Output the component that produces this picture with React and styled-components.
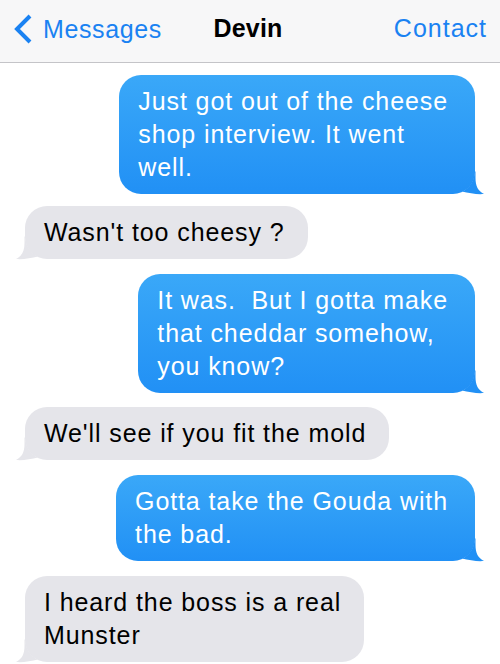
import React from "react";
import styled, { createGlobalStyle } from "styled-components";

const GlobalStyle = createGlobalStyle`
  html, body {
    margin: 0;
    padding: 0;
    background: #ffffff;
  }
  body {
    font-family: "Liberation Sans", Arial, Helvetica, sans-serif;
    -webkit-font-smoothing: antialiased;
  }
`;

const Screen = styled.div`
  width: 500px;
  height: 664px;
  overflow: hidden;
  background: #ffffff;
  display: flex;
  flex-direction: column;
`;

const NavBar = styled.header`
  box-sizing: border-box;
  height: 63px;
  flex: none;
  padding: 14px 13px 0 13px;
  background: #f7f7f8;
  border-bottom: 1px solid #c4c4c8;
  display: grid;
  grid-template-columns: 1fr auto 1fr;
  align-items: start;
`;

const BackButton = styled.div`
  display: flex;
  align-items: center;
  gap: 10px;
  color: #1a82f2;
  font-size: 25px;
  letter-spacing: 0.6px;
  line-height: 29px;
  justify-self: start;
`;

const Title = styled.div`
  font-size: 25px;
  font-weight: 700;
  line-height: 29px;
  color: #000;
  letter-spacing: 0.2px;
  transform: translateX(-2px);
`;

const NavAction = styled.div`
  justify-self: end;
  color: #1a82f2;
  font-size: 25px;
  line-height: 29px;
  letter-spacing: 1px;
`;

const Thread = styled.main`
  display: flex;
  flex-direction: column;
  padding: 12px 25px 0 25px;
`;

const Bubble = styled.div`
  position: relative;
  align-self: ${(p) => (p.$mine ? "flex-end" : "flex-start")};
  margin-top: ${(p) => p.$gap}px;
  padding: ${(p) => (p.$mine ? "10px 27px 10px 19px" : "10px 23px 10px 19px")};
  border-radius: 22px;
  background: ${(p) =>
    p.$mine ? "linear-gradient(180deg, #3aa8f8 0%, #2190f5 100%)" : "#e5e5ea"};
  color: ${(p) => (p.$mine ? "#ffffff" : "#000000")};
  font-size: 25px;
  line-height: 33px;
  letter-spacing: 0.9px;
`;

const Line = styled.span`
  display: block;
  white-space: pre;
`;

const TailSvg = styled.svg`
  position: absolute;
  bottom: 0;
  width: 34px;
  height: 22px;
  overflow: visible;
  ${(p) =>
    p.$mine
      ? "right: -10px;"
      : "left: -10px; transform: scaleX(-1);"}
`;

function Tail({ mine }) {
  return (
    <TailSvg $mine={mine} viewBox="0 0 34 22" aria-hidden="true">
      <path
        d="M24.5 -0.5 L24.5 6 C24.5 14 27 19 33 22 C27 22.6 18 21.5 11 19.6 A22 22 0 0 0 23.6 -0.5 Z"
        fill={mine ? "#2190f5" : "#e5e5ea"}
      />
    </TailSvg>
  );
}

const Chevron = () => (
  <svg width="20" height="30" viewBox="0 0 20 30" aria-hidden="true">
    <path
      d="M17 2 L4 15 L17 28"
      fill="none"
      stroke="#1a82f2"
      strokeWidth="4"
      strokeLinecap="butt"
      strokeLinejoin="miter"
    />
  </svg>
);

const messages = [
  { mine: true, gap: 0, lines: ["Just got out of the cheese", "shop interview. It went", "well."] },
  { mine: false, gap: 12, lines: ["Wasn't too cheesy ?"] },
  { mine: true, gap: 15, lines: ["It was.  But I gotta make", "that cheddar somehow,", "you know?"] },
  { mine: false, gap: 14, lines: ["We'll see if you fit the mold"] },
  { mine: true, gap: 15, lines: ["Gotta take the Gouda with", "the bad."] },
  { mine: false, gap: 15, lines: ["I heard the boss is a real", "Munster"] },
];

export default function App() {
  return (
    <>
      <GlobalStyle />
      <Screen>
        <NavBar>
          <BackButton>
            <Chevron />
            <span>Messages</span>
          </BackButton>
          <Title>Devin</Title>
          <NavAction>Contact</NavAction>
        </NavBar>
        <Thread>
          {messages.map((m, i) => (
            <Bubble key={i} $mine={m.mine} $gap={m.gap}>
              <Tail mine={m.mine} />
              {m.lines.map((l, j) => (
                <Line key={j}>{l}</Line>
              ))}
            </Bubble>
          ))}
        </Thread>
      </Screen>
    </>
  );
}
